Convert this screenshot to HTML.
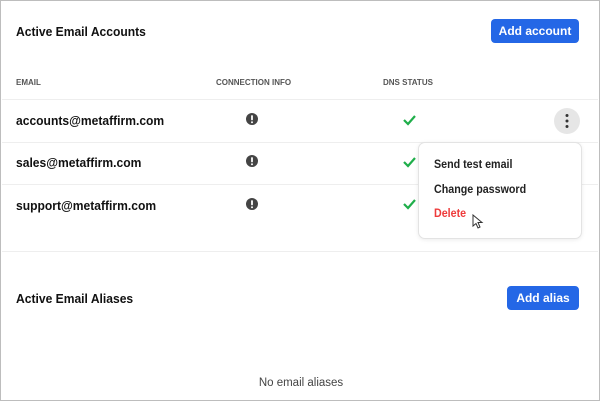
<!DOCTYPE html><html><head><style>
*{margin:0;padding:0;box-sizing:border-box}
body{width:600px;height:401px;background:#fff;font-family:"Liberation Sans",Arial,sans-serif;position:relative;overflow:hidden;border:1px solid #bdbdbd;color:#1a1a1a}
.a{position:absolute}
.s{transform:scaleX(.93);transform-origin:0 0;white-space:nowrap}
.t{font-weight:bold;font-size:13px;color:#111}
.btn{background:#2467e6;color:#fff;font-weight:bold;font-size:12px;border-radius:4px;text-align:center;line-height:24px}
.h{font-size:8px;font-weight:bold;color:#555;top:77px}
.line{left:1px;right:1px;height:1px;background:#eee}
.e{font-size:13px;font-weight:bold;left:15px;color:#111}
.m{font-size:11.5px;font-weight:bold;left:433px;color:#222}
</style></head><body>
<div class="a t s" style="left:15px;top:23px">Active Email Accounts</div>
<div class="a btn" style="left:490px;top:18px;width:88px">Add account</div>
<div class="a h" style="left:15px">EMAIL</div>
<div class="a h" style="left:215px">CONNECTION INFO</div>
<div class="a h" style="left:382px">DNS STATUS</div>
<div class="a line" style="top:98px"></div>
<div class="a line" style="top:141px"></div>
<div class="a line" style="top:183px"></div>
<div class="a line" style="top:250px"></div>
<div class="a e s" style="top:112px">accounts@metaffirm.com</div>
<div class="a e s" style="top:154px">sales@metaffirm.com</div>
<div class="a e s" style="top:197px">support@metaffirm.com</div>
<svg class="a" style="left:0;top:0" width="600" height="401">
<g fill="#444"><circle cx="251" cy="118" r="6"/><circle cx="251" cy="160" r="6"/><circle cx="251" cy="203" r="6"/></g>
<g stroke="#fff" stroke-width="1.8" stroke-linecap="round"><path d="M251 115v3.5M251 157v3.5M251 200v3.5"/></g>
<g fill="#fff"><circle cx="251" cy="121.3" r="1"/><circle cx="251" cy="163.3" r="1"/><circle cx="251" cy="206.3" r="1"/></g>
<g stroke="#1fae4a" stroke-width="2.2" fill="none"><path d="M403 119l4 4 7-8"/><path d="M403 161l4 4 7-8"/><path d="M403 203l4 4 7-8"/></g>
<circle cx="566" cy="120" r="13" fill="#e6e6e6"/>
<g fill="#333"><circle cx="566" cy="114.5" r="1.5"/><circle cx="566" cy="120" r="1.5"/><circle cx="566" cy="125.5" r="1.5"/></g>
</svg>
<div class="a" style="left:417px;top:141px;width:164px;height:97px;background:#fff;border:1px solid #e3e3e3;border-radius:7px;box-shadow:0 1px 4px rgba(0,0,0,.08)"></div>
<div class="a m s" style="top:158px">Send test email</div>
<div class="a m s" style="top:183px">Change password</div>
<div class="a m s" style="top:207px;color:#ee3b3b">Delete</div>
<svg class="a" style="left:471px;top:213px" width="12" height="16"><path d="M1 1v11l3-2.5 2 4.5 2-1-2-4.5h4z" fill="#fff" stroke="#333" stroke-width="1"/></svg>
<div class="a t s" style="left:15px;top:290px">Active Email Aliases</div>
<div class="a btn" style="left:506px;top:285px;width:72px">Add alias</div>
<div class="a" style="left:0;width:600px;top:376px;text-align:center;font-size:11.5px;color:#444">No email aliases</div>
</body></html>
